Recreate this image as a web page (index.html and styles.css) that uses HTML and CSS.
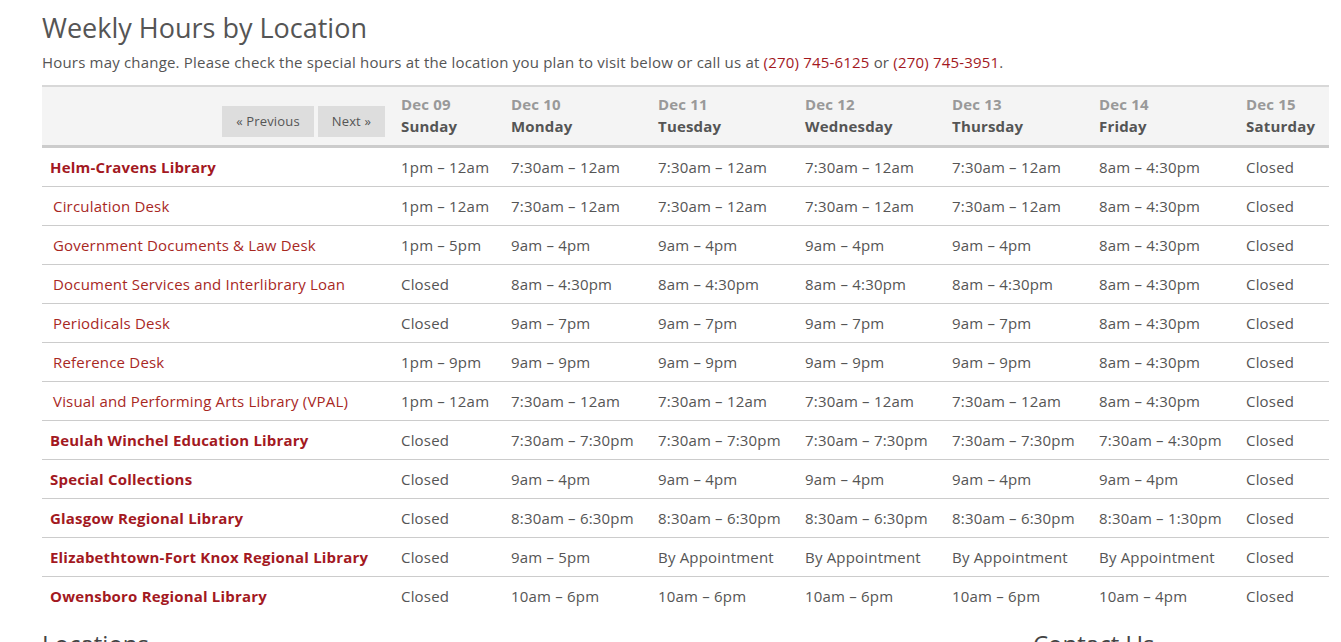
FILE: index.html
```html
<!DOCTYPE html>
<html>
<head>
<meta charset="utf-8">
<link rel="stylesheet" href="styles.css">
</head>
<body>
<div class="page">
  <h1 class="title">Weekly Hours by Location</h1>
  <p class="intro">Hours may change. Please check the special hours at the location you plan to visit below or call us at <a href="#">(270) 745-6125</a> or <a href="#">(270) 745-3951</a>.</p>
  <table class="hours">
    <colgroup>
      <col class="c-loc"><col class="c-sun"><col class="c-day"><col class="c-day"><col class="c-day"><col class="c-day"><col class="c-day"><col class="c-sat">
    </colgroup>
    <thead>
      <tr>
        <th class="nav"><span class="btn">« Previous</span><span class="btn">Next »</span></th>
        <th><span class="date">Dec 09</span><span class="dow">Sunday</span></th>
        <th><span class="date">Dec 10</span><span class="dow">Monday</span></th>
        <th><span class="date">Dec 11</span><span class="dow">Tuesday</span></th>
        <th><span class="date">Dec 12</span><span class="dow">Wednesday</span></th>
        <th><span class="date">Dec 13</span><span class="dow">Thursday</span></th>
        <th><span class="date">Dec 14</span><span class="dow">Friday</span></th>
        <th><span class="date">Dec 15</span><span class="dow">Saturday</span></th>
      </tr>
    </thead>
    <tbody>
      <tr><td class="lib">Helm-Cravens Library</td><td>1pm – 12am</td><td>7:30am – 12am</td><td>7:30am – 12am</td><td>7:30am – 12am</td><td>7:30am – 12am</td><td>8am – 4:30pm</td><td>Closed</td></tr>
      <tr><td class="sub">Circulation Desk</td><td>1pm – 12am</td><td>7:30am – 12am</td><td>7:30am – 12am</td><td>7:30am – 12am</td><td>7:30am – 12am</td><td>8am – 4:30pm</td><td>Closed</td></tr>
      <tr><td class="sub">Government Documents &amp; Law Desk</td><td>1pm – 5pm</td><td>9am – 4pm</td><td>9am – 4pm</td><td>9am – 4pm</td><td>9am – 4pm</td><td>8am – 4:30pm</td><td>Closed</td></tr>
      <tr><td class="sub">Document Services and Interlibrary Loan</td><td>Closed</td><td>8am – 4:30pm</td><td>8am – 4:30pm</td><td>8am – 4:30pm</td><td>8am – 4:30pm</td><td>8am – 4:30pm</td><td>Closed</td></tr>
      <tr><td class="sub">Periodicals Desk</td><td>Closed</td><td>9am – 7pm</td><td>9am – 7pm</td><td>9am – 7pm</td><td>9am – 7pm</td><td>8am – 4:30pm</td><td>Closed</td></tr>
      <tr><td class="sub">Reference Desk</td><td>1pm – 9pm</td><td>9am – 9pm</td><td>9am – 9pm</td><td>9am – 9pm</td><td>9am – 9pm</td><td>8am – 4:30pm</td><td>Closed</td></tr>
      <tr><td class="sub">Visual and Performing Arts Library (VPAL)</td><td>1pm – 12am</td><td>7:30am – 12am</td><td>7:30am – 12am</td><td>7:30am – 12am</td><td>7:30am – 12am</td><td>8am – 4:30pm</td><td>Closed</td></tr>
      <tr><td class="lib">Beulah Winchel Education Library</td><td>Closed</td><td>7:30am – 7:30pm</td><td>7:30am – 7:30pm</td><td>7:30am – 7:30pm</td><td>7:30am – 7:30pm</td><td>7:30am – 4:30pm</td><td>Closed</td></tr>
      <tr><td class="lib">Special Collections</td><td>Closed</td><td>9am – 4pm</td><td>9am – 4pm</td><td>9am – 4pm</td><td>9am – 4pm</td><td>9am – 4pm</td><td>Closed</td></tr>
      <tr><td class="lib">Glasgow Regional Library</td><td>Closed</td><td>8:30am – 6:30pm</td><td>8:30am – 6:30pm</td><td>8:30am – 6:30pm</td><td>8:30am – 6:30pm</td><td>8:30am – 1:30pm</td><td>Closed</td></tr>
      <tr><td class="lib">Elizabethtown-Fort Knox Regional Library</td><td>Closed</td><td>9am – 5pm</td><td>By Appointment</td><td>By Appointment</td><td>By Appointment</td><td>By Appointment</td><td>Closed</td></tr>
      <tr class="last"><td class="lib">Owensboro Regional Library</td><td>Closed</td><td>10am – 6pm</td><td>10am – 6pm</td><td>10am – 6pm</td><td>10am – 6pm</td><td>10am – 4pm</td><td>Closed</td></tr>
    </tbody>
  </table>
  <div class="footer">
    <h2 class="ftitle">Locations</h2>
    <h2 class="ftitle">Contact Us</h2>
  </div>
</div>
</body>
</html>
```
FILE: styles.css
```css
html, body {
  margin: 0;
  padding: 0;
  background: #fff;
}
body {
  font-family: "Open Sans", "DejaVu Sans", sans-serif;
  color: #555;
  font-size: 15px;
  line-height: 22px;
  letter-spacing: 0.19px;
}
.page {
  padding: 0 12px 0 42px;
}
.title {
  font-size: 27px;
  font-weight: 400;
  line-height: 34px;
  margin: 0;
  padding-top: 11px;
  color: #555;
  letter-spacing: 0;
}
.intro {
  margin: 6px 0 12px 0;
  font-size: 15px;
  line-height: 22px;
}
.intro a {
  color: #a3191f;
  text-decoration: none;
}
.hours {
  width: 1287px;
  border-collapse: collapse;
  table-layout: fixed;
}
.c-loc { width: 351px; }
.c-sun { width: 110px; }
.c-day { width: 147px; }
.c-sat { width: 91px; }
.hours thead tr {
  background: #f4f4f4;
  border-top: 2px solid #d8d8d8;
  border-bottom: 3px solid #cccccc;
}
.hours th {
  text-align: left;
  vertical-align: top;
  padding: 6px 8px 8px 8px;
  font-weight: 700;
  white-space: nowrap;
}
.hours th .date {
  display: block;
  color: #999;
}
.hours th .dow {
  display: block;
  color: #555;
}
.hours th.nav {
  text-align: right;
  vertical-align: bottom;
  padding: 0 8px 8px 0;
  font-weight: 400;
}
.btn {
  display: inline-block;
  background: #dddddd;
  color: #555;
  font-size: 13px;
  line-height: 19px;
  padding: 6px 14px 6px 14px;
  margin-left: 4px;
  letter-spacing: 0.15px;
}
.hours td {
  padding: 8px 8px;
  border-bottom: 1px solid #cccccc;
  white-space: nowrap;
  color: #555;
}
.hours tr.last td {
  border-bottom: none;
}
.hours td.lib {
  color: #a3191f;
  font-weight: 700;
}
.hours td.sub {
  color: #a8281f;
  padding-left: 11px;
}
.footer {
  display: grid;
  grid-template-columns: 991px 1fr;
  margin-top: 14px;
}
.ftitle {
  margin: 0;
  font-size: 24px;
  font-weight: 400;
  line-height: 30px;
  color: #444;
  letter-spacing: 0;
}
```
